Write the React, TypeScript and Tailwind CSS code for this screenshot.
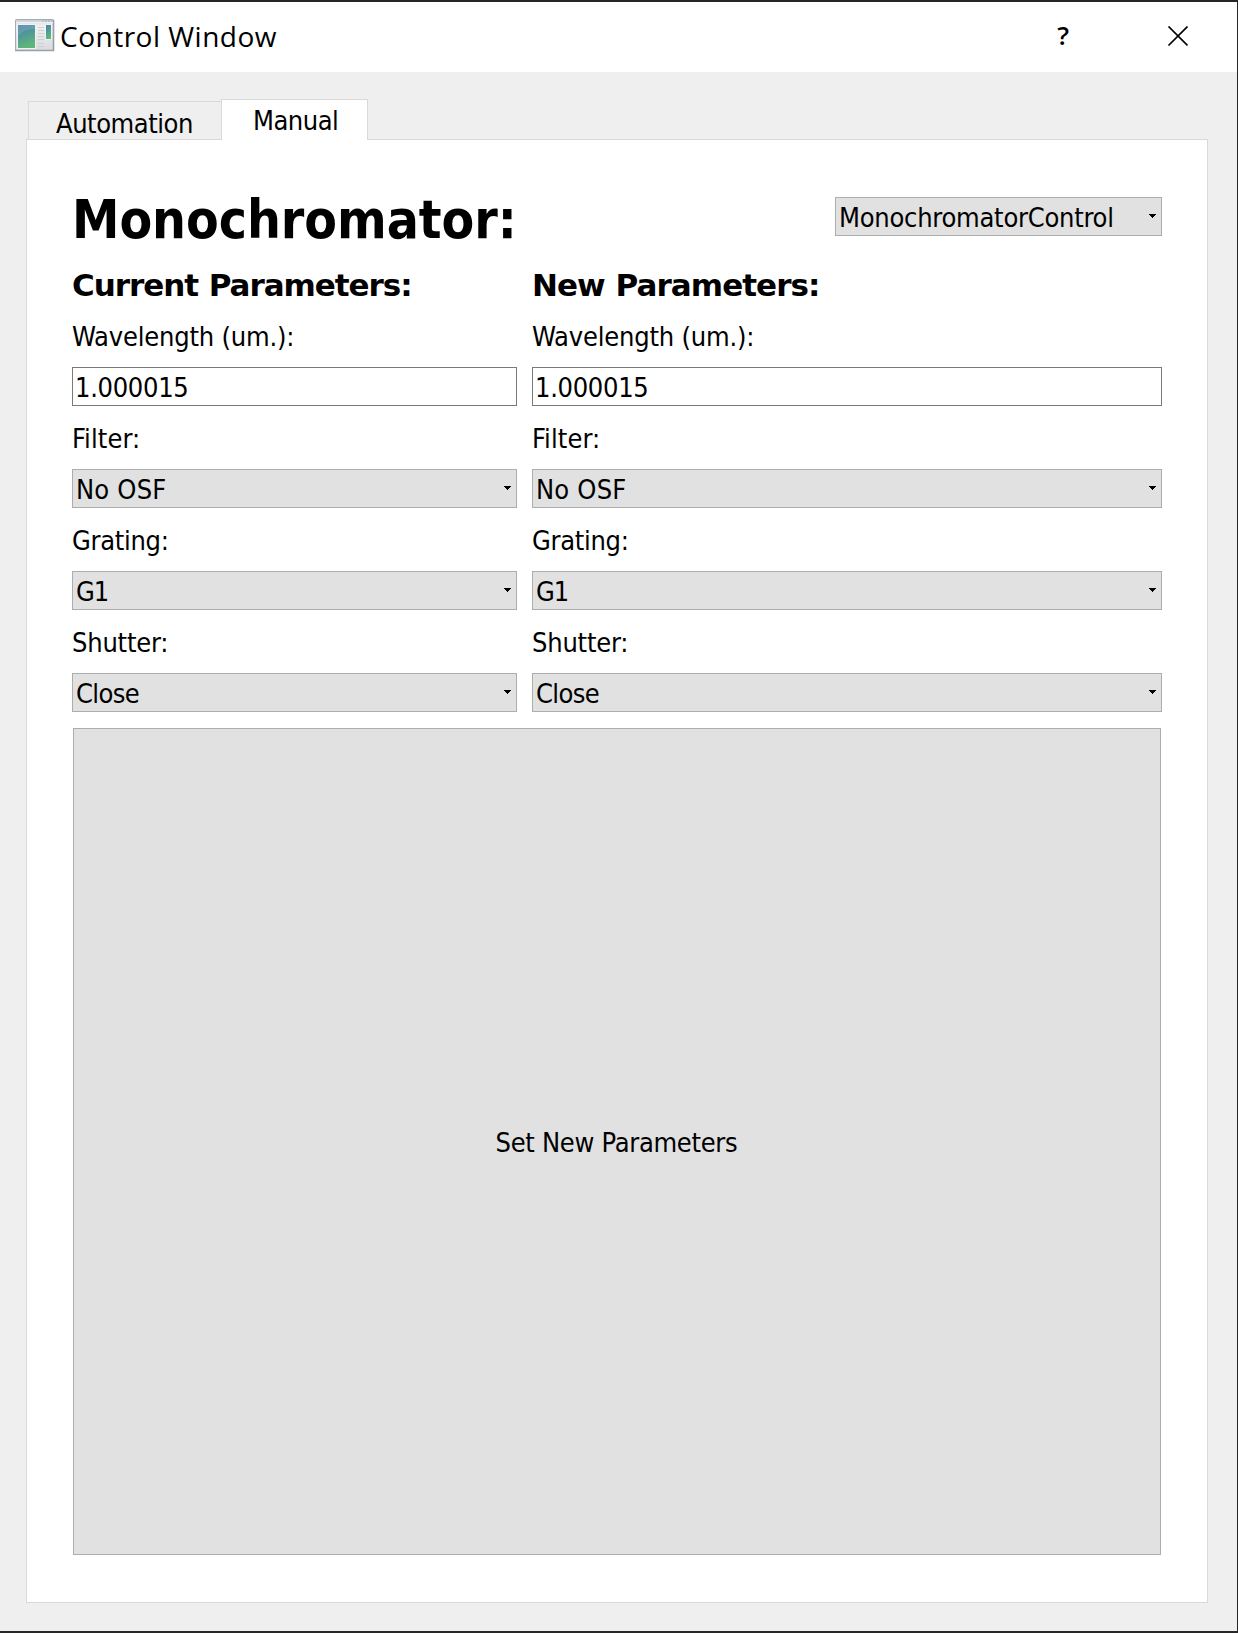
function AppIcon() {
  return (
    <svg width="40" height="34" viewBox="0 0 40 34" className="block">
      <defs>
        <linearGradient id="frame" x1="0" y1="0" x2="0" y2="1">
          <stop offset="0" stopColor="#c3c9d2" />
          <stop offset="0.2" stopColor="#f0f1f3" />
          <stop offset="1" stopColor="#d8dadd" />
        </linearGradient>
        <linearGradient id="pane" x1="0" y1="0" x2="0.3" y2="1">
          <stop offset="0" stopColor="#4b80ac" />
          <stop offset="0.5" stopColor="#519a96" />
          <stop offset="1" stopColor="#5fb67a" />
        </linearGradient>
      </defs>
      <rect x="0.5" y="1.5" width="38" height="31" rx="0.8" fill="url(#frame)" stroke="#a6adb5" />
      <path d="M0 32.5H39M38.5 33V2" fill="none" stroke="#9a9fa6" strokeWidth="1.6" />
      <path d="M27 3H37" stroke="#9fabb8" strokeDasharray="2 1" />
      <rect x="1.5" y="4" width="36.5" height="1.5" fill="#eceef1" />
      <rect x="2" y="6" width="19" height="25" fill="#eef2f5" />
      <rect x="3" y="7" width="17" height="23" fill="url(#pane)" />
      <path d="M3 18C8 12 14 11 20 11V7H3Z" fill="#fff" opacity="0.13" />
      <path d="M23 9.5H29M23 12.5H29M23 15.5H29M23 18.5H29M23 21.5H29M23 25.5H29M23 28.5H29" stroke="#cdd0d4" />
      <rect x="30.5" y="6.5" width="6" height="15" fill="#f5f8fa" />
      <rect x="31" y="7" width="5" height="14" fill="url(#pane)" />
    </svg>
  );
}

function Arrow() {
  return (
    <svg width="7" height="4" viewBox="0 0 7 4" shapeRendering="crispEdges" className="mt-[16px] block shrink-0">
      <path d="M0 0H7V1H6V2H5V3H4V4H3V3H2V2H1V1H0Z" fill="#000" />
    </svg>
  );
}

function Select({ value, text, width = "w-full" }: { value: string; text: string; width?: string }) {
  return (
    <div className={`flex h-[39px] justify-between border border-[#adadad] bg-[#e1e1e1] pl-[3px] pr-[5px] ${width}`}>
      <span className={`leading-[39px] ${text}`}>{value}</span>
      <Arrow />
    </div>
  );
}

function Label({ children, text }: { children: string; text: string }) {
  return <div className={`h-[63px] leading-[65px] ${text}`}>{children}</div>;
}

function Parameters({ title, titleText, width }: { title: string; titleText: string; width: string }) {
  return (
    <section className={width}>
      <h2 className={`mb-[2px] font-['DejaVu_Sans',sans-serif] text-[31px] font-bold leading-[34px] [font-stretch:normal] [word-spacing:1px] ${titleText}`}>{title}</h2>
      <Label text="tracking-[-0.2px]">Wavelength (um.):</Label>
      <div className="h-[39px] border border-[#7a7a7a] bg-white pl-[2px] leading-[39px] tracking-[-0.3px]">1.000015</div>
      <Label text="tracking-[0.1px]">Filter:</Label>
      <Select value="No OSF" text="tracking-[0.2px]" />
      <Label text="tracking-[-0.3px]">Grating:</Label>
      <Select value="G1" text="tracking-[-1px]" />
      <Label text="tracking-[-0.2px]">Shutter:</Label>
      <Select value="Close" text="tracking-[-0.6px]" />
    </section>
  );
}

export default function App() {
  return (
    <div className="flex h-[1633px] w-[1238px] flex-col whitespace-nowrap border-y-2 border-r border-[#262626] bg-[#efefef] font-['DejaVu_Sans_Condensed','DejaVu_Sans',sans-serif] text-[27px] text-black [font-stretch:condensed]">
      <header className="flex h-[70px] shrink-0 items-start bg-white pl-[15px] pr-[49px] pt-[16px] font-['Open_Sans',sans-serif] [font-stretch:normal]">
        <AppIcon />
        <h1 className="ml-[5px] grow text-[28px] leading-[37px] tracking-[0.5px]">Control Window</h1>
        <span className="mr-[98px] text-[26px] font-semibold leading-[35px]">?</span>
        <svg width="21" height="21" viewBox="0 0 21 21" className="mt-[8px] block">
          <path d="M1.5 0.5L20.5 19.5M20.5 0.5L1.5 19.5" stroke="#000" strokeWidth="1.7" />
        </svg>
      </header>
      <nav className="relative z-10 mt-[27px] flex h-[41px] shrink-0 items-end pl-[28px]">
        <div className="h-[39px] w-[194px] border border-[#d9d9d9] bg-[#efefef] pl-[27px] leading-[43px] tracking-[-0.45px]">Automation</div>
        <div className="-ml-px h-[41px] w-[147px] border border-b-0 border-[#d9d9d9] bg-white pl-[31px] leading-[41px] tracking-[-0.5px]">Manual</div>
      </nav>
      <main className="-mt-px ml-[26px] flex h-[1464px] w-[1182px] shrink-0 flex-col border border-[#d9d9d9] bg-white px-[45px] pt-[57px]">
        <div className="flex h-[71px] items-start justify-between">
          <h1 className="text-[53px] font-bold leading-[46px] tracking-[-0.05px]">Monochromator:</h1>
          <Select value="MonochromatorControl" text="tracking-[-0.25px]" width="w-[327px]" />
        </div>
        <div className="flex gap-[15px]">
          <Parameters title="Current Parameters:" titleText="tracking-[-1.05px]" width="w-[445px]" />
          <Parameters title="New Parameters:" titleText="tracking-[-0.95px]" width="w-[630px]" />
        </div>
        <button className="mx-px mt-[16px] h-[827px] border border-[#adadad] bg-[#e1e1e1] pt-[4px] pr-px tracking-[-0.3px]">Set New Parameters</button>
      </main>
    </div>
  );
}
